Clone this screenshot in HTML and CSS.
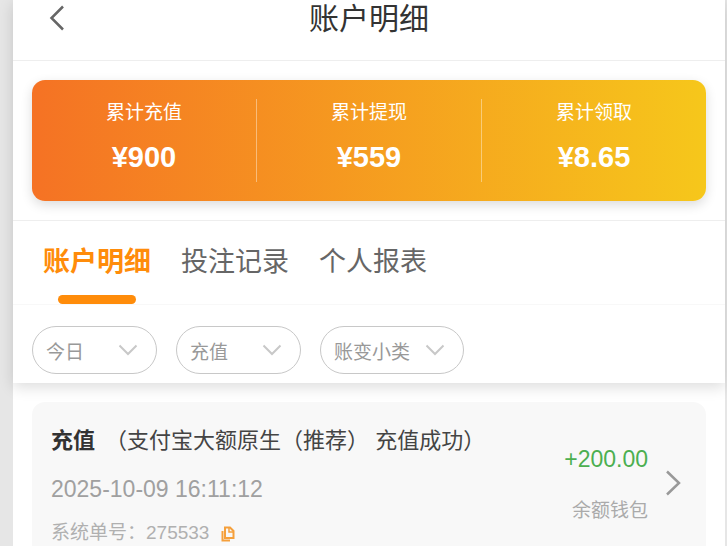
FILE: index.html
```html
<!DOCTYPE html>
<html lang="zh">
<head>
  <meta charset="utf-8">
  <title>账户明细</title>
  <link rel="stylesheet" href="styles.css">
</head>
<body>
  <div class="side"></div>
  <main class="page">
    <div class="panel">
      <header class="topbar">
        <svg class="back" width="18" height="26" viewBox="0 0 18 26"><path d="M15 1.500 3.500 13 15 24.500" fill="none" stroke="#666" stroke-width="2.500"/></svg>
        <h1>账户明细</h1>
      </header>
      <section class="totals-wrap">
        <div class="totals">
          <div class="total"><span class="total-label">累计充值</span><b class="total-num">¥900</b></div>
          <div class="total"><span class="total-label">累计提现</span><b class="total-num">¥559</b></div>
          <div class="total"><span class="total-label">累计领取</span><b class="total-num">¥8.65</b></div>
        </div>
      </section>
      <nav class="tabs">
        <a class="tab active">账户明细</a>
        <a class="tab">投注记录</a>
        <a class="tab">个人报表</a>
      </nav>
      <div class="filters">
        <div class="pill pill-a"><span>今日</span><svg width="20" height="12" viewBox="0 0 20 12"><path d="M1.500 1.500 10 10l8.500-8.500" fill="none" stroke="#c8c8c8" stroke-width="2"/></svg></div>
        <div class="pill pill-a"><span>充值</span><svg width="20" height="12" viewBox="0 0 20 12"><path d="M1.500 1.500 10 10l8.500-8.500" fill="none" stroke="#c8c8c8" stroke-width="2"/></svg></div>
        <div class="pill pill-b"><span>账变小类</span><svg width="20" height="12" viewBox="0 0 20 12"><path d="M1.500 1.500 10 10l8.500-8.500" fill="none" stroke="#c8c8c8" stroke-width="2"/></svg></div>
      </div>
    </div>
    <section class="list">
      <article class="record">
        <div class="record-main">
          <p class="record-title"><b>充值</b>（支付宝大额原生（推荐） 充值成功）</p>
          <p class="record-time">2025-10-09 16:11:12</p>
          <p class="record-no">系统单号：275533
            <svg class="copy" width="14" height="16" viewBox="0 0 14 16"><path d="M4 1.500h5l3.500 3.500v7H4z" fill="none" stroke="#f5a03c" stroke-width="2"/><path d="M1.500 5v9.500H9" fill="none" stroke="#f5a03c" stroke-width="2"/><path d="M8 2v4h4" fill="none" stroke="#f5a03c" stroke-width="1.500"/></svg>
          </p>
        </div>
        <div class="record-side">
          <span class="amount">+200.00</span>
          <span class="wallet">余额钱包</span>
        </div>
        <svg class="more" width="16" height="26" viewBox="0 0 16 26"><path d="M2 1.500 14 13 2 24.500" fill="none" stroke="#999" stroke-width="2.500"/></svg>
      </article>
    </section>
  </main>
</body>
</html>
```
FILE: styles.css
```css
*{
    box-sizing: border-box;
}
html, body{
    height: 100%;
}
body{
    margin: 0;
    display: flex;
    overflow: hidden;
    background: #e6e6e6;
    font-family: "Liberation Sans", "Noto Sans CJK SC", sans-serif;
}
.side{
    width: 13px;
    flex: none;
}
.page{
    width: 712px;
    flex: none;
    background: #fff;
}
.panel{
    height: 383px;
    box-shadow: 0 4px 14px rgba(0,0,0,.14);
}
.topbar{
    height: 61px;
    display: flex;
    justify-content: center;
    border-bottom: 1px solid #eee;
    position: relative;
}
.back{
    position: absolute;
    left: 35px;
    top: 5px;
}
h1{
    margin: 0;
    font-size: 30px;
    font-weight: 400;
    line-height: 38px;
    color: #333;
}
.totals-wrap{
    height: 160px;
    padding: 19px 19px 0;
    border-bottom: 1px solid #eee;
}
.totals{
    height: 121px;
    padding: 19px 0;
    display: flex;
    border-radius: 13px;
    background: linear-gradient(90deg, #f57224, #f6c71b);
    box-shadow: 0 4px 12px rgba(0,0,0,.14);
}
.total{
    flex: 1;
    display: flex;
    flex-direction: column;
    align-items: center;
    color: #fff;
    border-right: 1px solid rgba(255,255,255,.4);
}
.total:last-child{
    border-right: 0;
}
.total-label{
    font-size: 19px;
    line-height: 28px;
}
.total-num{
    margin-top: 12px;
    font-size: 29px;
    line-height: 36px;
}
.tabs{
    height: 84px;
    padding-left: 30px;
    display: flex;
    gap: 30px;
    border-bottom: 1px solid #f8f8f8;
}
.tab{
    position: relative;
    padding-top: 23px;
    font-size: 27px;
    line-height: 37px;
    color: #666;
}
.tab.active{
    color: #ff8c0a;
    font-weight: 700;
}
.tab.active::after{
    content: "";
    position: absolute;
    left: 15px;
    right: 15px;
    bottom: 0;
    height: 9px;
    border-radius: 5px;
    background: #ff8c0a;
}
.filters{
    padding: 21px 19px 0;
    display: flex;
    gap: 19px;
}
.pill{
    height: 48px;
    padding: 0 18px 0 13px;
    display: flex;
    align-items: center;
    justify-content: space-between;
    border: 1px solid #c8c8c8;
    border-radius: 24px;
    font-size: 19px;
    color: #999;
}
.pill-a{
    width: 125px;
}
.pill-b{
    width: 144px;
}
.list{
    padding: 19px 19px 0;
}
.record{
    height: 200px;
    padding: 23px 19px;
    display: flex;
    border-radius: 13px;
    background: #f8f8f8;
}
.record-main{
    flex: 1;
}
.record-main p{
    margin: 0;
}
.record-title{
    font-size: 22px;
    line-height: 32px;
    color: #444;
}
.record-title b{
    margin-right: 10px;
    color: #333;
}
.record-time{
    margin-top: 17px !important;
    font-size: 23px;
    line-height: 30px;
    color: #a0a0a0;
}
.record-no{
    margin-top: 16px !important;
    font-size: 19px;
    line-height: 26px;
    color: #b0b0b0;
}
.copy{
    vertical-align: -3px;
    margin-left: 6px;
}
.record-side{
    padding-top: 19px;
    display: flex;
    flex-direction: column;
    align-items: flex-end;
    position: absolute;
    right: 79px;
}
.amount{
    font-size: 23px;
    line-height: 30px;
    color: #4caf50;
}
.wallet{
    margin-top: 24px;
    font-size: 19px;
    line-height: 26px;
    color: #aaa;
}
.more{
    position: absolute;
    left: 665px;
    top: 470px;
}
```
